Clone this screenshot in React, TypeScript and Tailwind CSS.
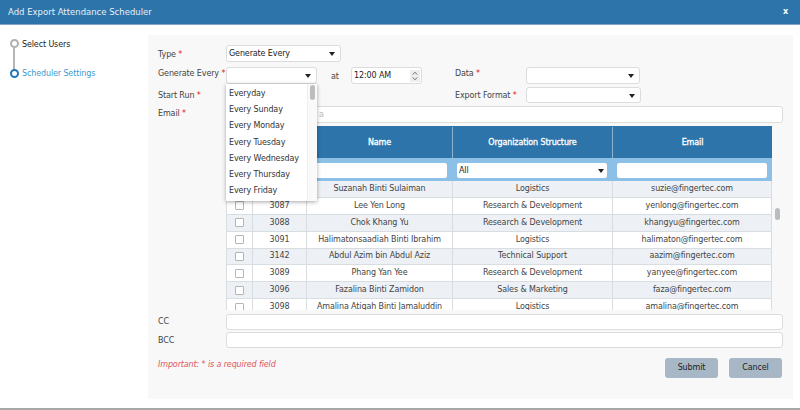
const rows = [
  ["", "Suzanah Binti Sulaiman", "Logistics", "suzie@fingertec.com"],
  ["3087", "Lee Yen Long", "Research & Development", "yenlong@fingertec.com"],
  ["3088", "Chok Khang Yu", "Research & Development", "khangyu@fingertec.com"],
  ["3091", "Halimatonsaadiah Binti Ibrahim", "Logistics", "halimaton@fingertec.com"],
  ["3142", "Abdul Azim bin Abdul Aziz", "Technical Support", "aazim@fingertec.com"],
  ["3089", "Phang Yan Yee", "Research & Development", "yanyee@fingertec.com"],
  ["3096", "Fazalina Binti Zamidon", "Sales & Marketing", "faza@fingertec.com"],
  ["3098", "Amalina Atiqah Binti Jamaluddin", "Logistics", "amalina@fingertec.com"],
];
const options = ["Everyday", "Every Sunday", "Every Monday", "Every Tuesday", "Every Wednesday", "Every Thursday", "Every Friday"];

function Caret() {
  return <span className="absolute right-[5px] top-[6px] w-0 h-0 border-l-[3px] border-r-[3px] border-t-[4px] border-l-transparent border-r-transparent border-t-[#222]" />;
}

function Box({ className, children, caret }: { className: string; children?: React.ReactNode; caret?: boolean }) {
  return (
    <div className={`absolute bg-white border border-[#dcdcdc] rounded-[3px] flex items-center pl-[2px] text-[#222] ${className}`}>
      {children}
      {caret && <Caret />}
    </div>
  );
}

function Label({ className, text, req }: { className: string; text: string; req?: boolean }) {
  return (
    <div className={`absolute leading-[14px] text-[#444] whitespace-nowrap ${className}`}>
      {text}
      {req && <span className="text-[#e02020]"> *</span>}
    </div>
  );
}

export default function App() {
  return (
    <div className="relative w-[800px] h-[410px] overflow-hidden bg-white text-[8px] tracking-[-0.12px] [font-family:DejaVu_Sans,sans-serif]">
      <div className="h-[25px] bg-[#2d74ab] border-b border-[#7fa6c6] flex items-center justify-between pl-[8px] pr-[12px] text-white">
        <span className="text-[8.5px] tracking-[0px] text-[#e8f0f6]">Add Export Attendance Scheduler</span>
        <span className="font-bold">x</span>
      </div>

      <div className="absolute left-[13px] top-[48px] w-[2px] h-[22px] bg-[#b5b5b5]" />
      <div className="absolute left-[10px] top-[39px] w-[9px] h-[9px] rounded-full border-2 border-[#b0b0b0] bg-white" />
      <div className="absolute left-[10px] top-[69px] w-[9px] h-[9px] rounded-full border-2 border-[#1f76b8] bg-white" />
      <div className="absolute left-[22px] top-[38px] leading-[14px] text-[#222]">Select Users</div>
      <div className="absolute left-[22px] top-[67px] leading-[14px] text-[#3b9bd0]">Scheduler Settings</div>

      <div className="absolute left-[148px] top-[35px] w-[645px] h-[364px] bg-[#f8f8f8]" />

      <Label className="left-[158px] top-[48px]" text="Type" req />
      <Label className="left-[158px] top-[67px]" text="Generate Every" req />
      <Label className="left-[158px] top-[89px]" text="Start Run" req />
      <Label className="left-[158px] top-[107px]" text="Email" req />
      <Label className="left-[331px] top-[70px]" text="at" />
      <Label className="left-[455px] top-[67px]" text="Data" req />
      <Label className="left-[455px] top-[89px]" text="Export Format" req />
      <Label className="left-[158px] top-[315px]" text="CC" />
      <Label className="left-[158px] top-[334px]" text="BCC" />

      <Box className="left-[226px] top-[45px] w-[115px] h-[17px]" caret>Generate Every</Box>
      <Box className="left-[226px] top-[67px] w-[91px] h-[17px]" caret />
      <Box className="left-[351px] top-[67px] w-[71px] h-[17px]">
        12:00 AM
        <span className="absolute right-[1px] top-[2px] w-[10px] h-[12px] bg-[#eeeeee] flex items-center justify-center">
          <svg width="6" height="10" viewBox="0 0 6 10" fill="none" stroke="#666" strokeWidth="0.9">
            <path d="M0.8 3.6 3 1.2l2.2 2.4M0.8 6.4 3 8.8l2.2-2.4" />
          </svg>
        </span>
      </Box>
      <Box className="left-[526px] top-[67px] w-[114px] h-[17px]" caret />
      <Box className="left-[526px] top-[87px] w-[115px] h-[16px]" caret />
      <Box className="left-[226px] top-[106px] w-[557px] h-[17px]">
        <span className="ml-[90px] text-[#bbb]">a</span>
      </Box>

      <div className="absolute left-[226px] top-[126px] w-[546px] h-[184px] overflow-hidden">
        <div className="h-[32px] pt-[1px] bg-[#2d74ab] flex text-white [-webkit-text-stroke:0.3px_white] text-center items-stretch">
          <div className="w-[27px] border-r border-[#8fb3cf]" />
          <div className="w-[54px] border-r border-[#8fb3cf]" />
          <div className="w-[146px] border-r border-[#8fb3cf] flex items-center justify-center">Name</div>
          <div className="w-[160px] border-r border-[#8fb3cf] flex items-center justify-center">Organization Structure</div>
          <div className="w-[159px] flex items-center justify-center">Email</div>
        </div>
        <div className="h-[23.2px] bg-[#8cc0e6] relative">
          <div className="absolute left-[81px] top-[5px] w-[140px] h-[15px] bg-white rounded-[2px]" />
          <div className="absolute left-[231px] top-[5px] w-[150px] h-[15px] bg-white rounded-[2px] flex items-center pl-[2px] text-[#222]">
            All
            <span className="absolute right-[3px] top-[6px] w-0 h-0 border-l-[3px] border-r-[3px] border-t-[4px] border-l-transparent border-r-transparent border-t-[#222]" />
          </div>
          <div className="absolute left-[391px] top-[5px] w-[150px] h-[15px] bg-white rounded-[2px]" />
        </div>
        {rows.map((r, i) => (
          <div key={i} className={`h-[16.85px] flex items-center text-center text-[#444] border-b border-[#d8dde2] ${i % 2 === 0 ? "bg-[#edf1f6]" : "bg-white"}`}>
            <div className="w-[27px] h-full border-r border-l border-[#d8dde2] flex items-center justify-center">
              <span className="w-[9px] h-[9px] bg-white border border-[#b5b5b5] rounded-[1px]" />
            </div>
            <div className="w-[54px] h-full border-r border-[#d8dde2] flex items-center justify-center">{r[0]}</div>
            <div className="w-[146px] h-full border-r border-[#d8dde2] flex items-center justify-center whitespace-nowrap">{r[1]}</div>
            <div className="w-[160px] h-full border-r border-[#d8dde2] flex items-center justify-center whitespace-nowrap">{r[2]}</div>
            <div className="w-[159px] h-full border-r border-[#d8dde2] flex items-center justify-center">{r[3]}</div>
          </div>
        ))}
      </div>

      <div className="absolute left-[775px] top-[208px] w-[5px] h-[12px] rounded-[3px] bg-[#b8bdc2]" />

      <div className="absolute left-[226px] top-[84px] w-[91px] h-[117px] bg-white shadow-[0_1px_4px_rgba(0,0,0,0.35)] pt-[2px] text-[#333]">
        {options.map((o) => (
          <div key={o} className="h-[16.2px] pl-[3px] flex items-center whitespace-nowrap">{o}</div>
        ))}
        <div className="absolute right-0 top-0 w-[10px] h-full bg-[#fafafa] border-l border-[#eee]" />
        <div className="absolute right-[2px] top-[1px] w-[5px] h-[15px] rounded-[3px] bg-[#bdbdbd]" />
      </div>

      <Box className="left-[226px] top-[314px] w-[557px] h-[16px]" />
      <Box className="left-[226px] top-[332px] w-[557px] h-[16px]" />

      <div className="absolute left-[158px] top-[358px] leading-[14px] italic text-[#e0555c]">Important: * is a required field</div>

      <div className="absolute left-[665px] top-[358px] w-[53px] h-[20px] rounded-[3px] bg-[#a7b7c5] flex items-center justify-center text-[#222]">Submit</div>
      <div className="absolute left-[729px] top-[358px] w-[53px] h-[20px] rounded-[3px] bg-[#a7b7c5] flex items-center justify-center text-[#222]">Cancel</div>

      <div className="absolute left-0 top-[408px] w-full h-[2px] bg-[#a8a8a8]" />
    </div>
  );
}
